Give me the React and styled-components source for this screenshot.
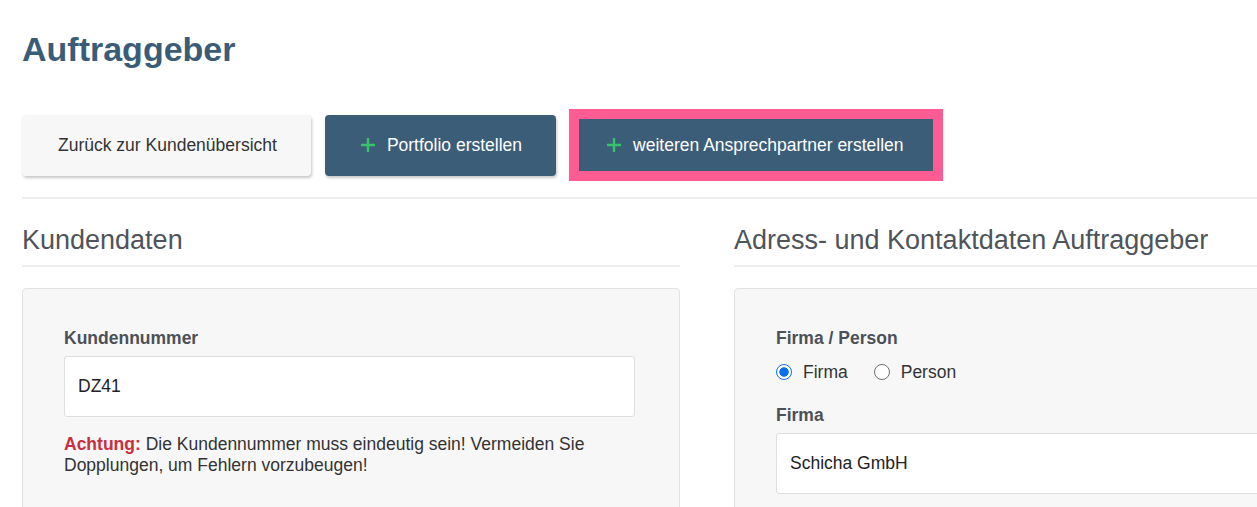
import React from "react"
import styled, { createGlobalStyle } from "styled-components"

const GlobalStyle = createGlobalStyle`
  html, body {
    margin: 0;
    padding: 0;
    background: #ffffff;
    overflow: hidden;
  }
  body {
    font-family: "Liberation Sans", Arial, sans-serif;
    font-size: 17.5px;
    color: #333;
  }
`

const Page = styled.div`
  width: 1392px;
  padding: 29px 0 0 22px;
  box-sizing: border-box;
`

const Title = styled.h1`
  margin: 0;
  font-size: 34px;
  line-height: 40px;
  font-weight: 700;
  color: #3b5c77;
`

const Toolbar = styled.div`
  display: flex;
  align-items: center;
  margin-top: 40px;
  height: 72px;
`

const Button = styled.button`
  display: flex;
  align-items: center;
  gap: 12px;
  height: 61px;
  padding: 0 34px 0 36px;
  margin-right: ${({ $gap }) => $gap || 0}px;
  font-family: inherit;
  font-size: 17.5px;
  border-radius: 4px;
  border: none;
  cursor: pointer;
  background: ${({ $primary }) => ($primary ? "#3c5d78" : "#f7f7f7")};
  color: ${({ $primary }) => ($primary ? "#ffffff" : "#333333")};
  box-shadow: 1px 2px 3px rgba(0, 0, 0, 0.22);
`

const HighlightButton = styled(Button)`
  height: 72px;
  border: 10px solid #ff5c94;
  border-radius: 0;
  padding: 0 29px 0 28px;
  box-shadow: none;
`

const Plus = () => (
  <svg width="14" height="14" viewBox="0 0 14 14">
    <path d="M7 0v14M0 7h14" stroke="#35c46a" strokeWidth="2.4" />
  </svg>
)

const Divider = styled.hr`
  margin: 16px 0 0;
  border: none;
  height: 2px;
  background: #eeeeee;
`

const Columns = styled.div`
  display: grid;
  grid-template-columns: 658px 658px;
  column-gap: 54px;
  margin-top: 25px;
`

const SectionHeading = styled.h3`
  margin: 0;
  padding-bottom: 8px;
  font-size: 27px;
  line-height: 33px;
  font-weight: 400;
  color: #4f545a;
  border-bottom: 2px solid #eeeeee;
`

const Card = styled.div`
  margin-top: 21px;
  padding: 38px 44px 40px 41px;
  background: #f7f7f7;
  border: 1px solid #e2e2e2;
  border-radius: 4px;
  min-height: 200px;
`

const Label = styled.div`
  font-weight: 700;
  font-size: 17.5px;
  line-height: 22px;
  color: #4d5157;
  margin-top: ${({ $top }) => $top || 0}px;
`

const Input = styled.div`
  margin-top: 7px;
  height: 61px;
  box-sizing: border-box;
  display: flex;
  align-items: center;
  padding: 0 13px;
  background: #ffffff;
  border: 1px solid #dcdfe2;
  border-radius: 3px;
  color: #222;
  font-size: 17.5px;
`

const Note = styled.p`
  margin: 17px 0 0;
  font-size: 17.5px;
  line-height: 21px;
  color: #333;
  padding-right: 40px;
`

const Warn = styled.strong`
  color: #c9303e;
`

const RadioRow = styled.div`
  display: flex;
  align-items: center;
  margin-top: 12px;
  height: 22px;
`

const RadioOption = styled.label`
  display: flex;
  align-items: center;
  gap: 11px;
  margin-right: 26px;
  color: #333;
`

const Radio = styled.span`
  width: 16px;
  height: 16px;
  box-sizing: border-box;
  border-radius: 50%;
  border: ${({ $checked }) => ($checked ? "1.5px solid #0a6fe8" : "1px solid #6f6f6f")};
  background: ${({ $checked }) =>
    $checked ? "radial-gradient(circle, #0a6fe8 0 4.4px, #ffffff 5px)" : "#ffffff"};
`

export default function App() {
  return (
    <Page>
      <GlobalStyle />
      <Title>Auftraggeber</Title>
      <Toolbar>
        <Button $gap={14}>Zurück zur Kundenübersicht</Button>
        <Button $primary $gap={13}>
          <Plus />
          Portfolio erstellen
        </Button>
        <HighlightButton $primary>
          <Plus />
          weiteren Ansprechpartner erstellen
        </HighlightButton>
      </Toolbar>
      <Divider />
      <Columns>
        <div>
          <SectionHeading>Kundendaten</SectionHeading>
          <Card>
            <Label>Kundennummer</Label>
            <Input>DZ41</Input>
            <Note>
              <Warn>Achtung:</Warn> Die Kundennummer muss eindeutig sein! Vermeiden Sie
              Dopplungen, um Fehlern vorzubeugen!
            </Note>
          </Card>
        </div>
        <div>
          <SectionHeading>Adress- und Kontaktdaten Auftraggeber</SectionHeading>
          <Card>
            <Label>Firma / Person</Label>
            <RadioRow>
              <RadioOption>
                <Radio $checked />
                Firma
              </RadioOption>
              <RadioOption>
                <Radio />
                Person
              </RadioOption>
            </RadioRow>
            <Label $top={21}>Firma</Label>
            <Input>Schicha GmbH</Input>
          </Card>
        </div>
      </Columns>
    </Page>
  )
}
